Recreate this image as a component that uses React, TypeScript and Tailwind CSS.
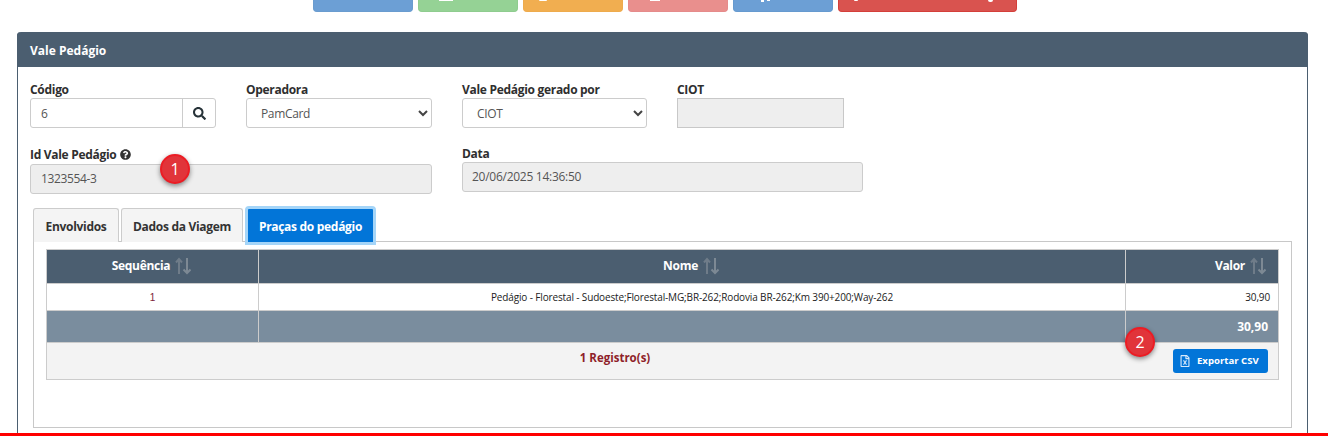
import React from "react";
import { FaSearch, FaQuestionCircle, FaRegFileExcel } from "react-icons/fa";

const font = { fontFamily: '"Open Sans", sans-serif' };

function SortIcon() {
  return (
    <svg width="16" height="18" viewBox="0 0 16 18" className="ml-[5px] shrink-0" fill="none" stroke="#6f7c89" strokeWidth="2">
      <path d="M4 17V2M1 5.5l3-3.5 3 3.5" />
      <path d="M12 1v15M8.5 12.5l3.5 3.5 3.5-3.5" stroke="#7d8994" />
    </svg>
  );
}

function Label({ children, className = "" }: { children: React.ReactNode; className?: string }) {
  return <div className={`text-[12px] leading-[17px] font-bold tracking-[-0.3px] text-[#2f2f2f] ${className}`}>{children}</div>;
}

function Select({ value }: { value: string }) {
  return (
    <div className="flex h-[30px] items-center justify-between rounded-[3px] border border-[#ccc] bg-white pl-[14px] pr-[3px] pt-[2px] text-[12px] tracking-[-0.35px] text-[#555]">
      <span>{value}</span>
      <svg width="10" height="7" viewBox="0 0 10 7" fill="none" stroke="#444" strokeWidth="2" className="-mt-[2px]">
        <path d="M1 1l4 4 4-4" />
      </svg>
    </div>
  );
}

function Badge({ n, className }: { n: number; className: string }) {
  return (
    <div className={`absolute flex h-[30px] w-[30px] items-center justify-center rounded-full border-2 border-[#ec1c24] bg-[#e1343a] text-[16px] text-white shadow-[0_2px_5px_rgba(0,0,0,0.45)] ${className}`}>
      {n}
    </div>
  );
}

function TopButton({ className, children }: { className: string; children?: React.ReactNode }) {
  return <div className={`relative rounded-b-[4px] border border-t-0 ${className}`}>{children}</div>;
}

function Sliver({ className }: { className: string }) {
  return <span className={`absolute top-0 bg-white ${className}`} />;
}

export default function App() {
  return (
    <div className="relative h-[436px] w-[1328px] overflow-hidden bg-white" style={font}>
      <div className="flex h-[12px] gap-[5px] pl-[313px]">
        <TopButton className="w-[100px] border-[#6a9ccf] bg-[#6c9fd5]" />
        <TopButton className="w-[100px] border-[#8fcc8f] bg-[#95d295]">
          <Sliver className="left-[20px] h-[1px] w-[14px]" />
        </TopButton>
        <TopButton className="w-[100px] border-[#eeab4d] bg-[#f1ae50]">
          <Sliver className="left-[15px] h-[1px] w-[8px] rounded-b-full" />
        </TopButton>
        <TopButton className="w-[100px] border-[#e58b8b] bg-[#e98f8d]">
          <Sliver className="left-[21px] h-[1px] w-[10px]" />
        </TopButton>
        <TopButton className="w-[100px] border-[#669acf] bg-[#6c9fd5]">
          <Sliver className="left-[27px] h-[2px] w-[3px]" />
          <Sliver className="left-[33px] h-[1px] w-[3px]" />
        </TopButton>
        <TopButton className="w-[179px] border-[#d43f3a] bg-[#d9534f]">
          <Sliver className="left-[15px] h-[1px] w-[4px] rounded-b-full" />
          <Sliver className="left-[149px] h-[2px] w-[5px] rounded-b-full" />
        </TopButton>
      </div>

      <div className="ml-[17px] mt-[20px] h-[401px] w-[1291px] rounded-t-[4px] border-x border-[#4b5e70]">
        <div className="-mx-px flex h-[35px] items-center rounded-t-[4px] bg-[#4b5e70] pl-[13px] pt-[2px] text-[12px] font-bold text-white">
          Vale Pedágio
        </div>

        <div className="relative px-[12px]">
          <div className="flex pt-[14px]">
            <div className="w-[186px]">
              <Label>Código</Label>
              <div className="flex h-[30px] rounded-[3px] border border-[#ccc] bg-white text-[12px] text-[#555]">
                <div className="flex flex-1 items-center pl-[10px] pt-[2px]">6</div>
                <div className="flex w-[33px] items-center justify-center border-l border-[#ccc] text-[#263238]">
                  <FaSearch size={13} />
                </div>
              </div>
            </div>
            <div className="ml-[30px] w-[186px]">
              <Label>Operadora</Label>
              <Select value="PamCard" />
            </div>
            <div className="ml-[30px] w-[185px]">
              <Label>Vale Pedágio gerado por</Label>
              <Select value="CIOT" />
            </div>
            <div className="ml-[30px] w-[167px]">
              <Label>CIOT</Label>
              <div className="h-[30px] border border-[#c8c8c8] bg-[#eee]" />
            </div>
          </div>

          <div className="flex pt-[17px]">
            <div className="w-[402px] pt-[1px]">
              <Label className="flex items-center gap-[4px]">
                Id Vale Pedágio <FaQuestionCircle size={11} className="text-[#333]" />
              </Label>
              <div className="mt-[1px] flex h-[30px] items-center rounded-[3px] border border-[#ccc] bg-[#eee] pl-[10px] text-[12px] tracking-[-0.35px] text-[#555]">
                1323554-3
              </div>
            </div>
            <div className="ml-[30px] w-[401px]">
              <Label>Data</Label>
              <div className="flex h-[30px] items-center rounded-[3px] border border-[#ccc] bg-[#eee] pl-[9px] text-[12px] tracking-[-0.27px] text-[#555]">
                20/06/2025 14:36:50
              </div>
            </div>
          </div>

          <Badge n={1} className="left-[142px] top-[87px]" />

          <div className="relative z-10 ml-[3px] mt-[14px] flex h-[34px] items-end gap-[2px] text-[12px] font-bold tracking-[-0.3px]">
            <div className="flex h-[34px] w-[86px] items-center justify-center rounded-t-[3px] border border-b-0 border-[#ccc] bg-[#f4f4f4] pt-[3px] text-[#333]">
              Envolvidos
            </div>
            <div className="flex h-[34px] w-[122px] items-center justify-center rounded-t-[3px] border border-b-0 border-[#ccc] bg-[#f4f4f4] pt-[3px] text-[#333]">
              Dados da Viagem
            </div>
            <div className="-mb-[3px] flex h-[39px] w-[131px] items-center justify-center rounded-t-[4px] border-[3px] border-[#a5d5f8] bg-[#0275d8] pt-[2px] text-white">
              Praças do pedágio
            </div>
          </div>

          <div className="relative ml-[3px] -mt-px h-[187px] w-[1259px] border border-[#c8c8c8] px-[12px] pt-[7px]">
            <div className="w-[1233px] border border-[#ccc]">
              <div className="flex h-[33px] bg-[#4b5e70] text-[12px] font-bold tracking-[-0.3px] text-white">
                <div className="flex w-[212px] items-center justify-center border-r border-[#ccc] pb-[1px] pr-[2px]">
                  Sequência <SortIcon />
                </div>
                <div className="flex flex-1 items-center justify-center border-r border-[#ccc] pb-[1px] pr-[2px]">
                  Nome <SortIcon />
                </div>
                <div className="flex w-[152px] items-center justify-end pb-[1px] pr-[12px]">
                  Valor <SortIcon />
                </div>
              </div>
              <div className="flex h-[27px] border-t border-[#ccc] bg-white text-[10px] tracking-[-0.14px] text-[#222]">
                <div className="flex w-[212px] items-center justify-center border-r border-[#ccc] text-[#7d1f3a]" style={{ fontFamily: '"Liberation Sans", sans-serif' }}>
                  1
                </div>
                <div className="flex flex-1 items-center justify-center border-r border-[#ccc]">
                  Pedágio - Florestal - Sudoeste;Florestal-MG;BR-262;Rodovia BR-262;Km 390+200;Way-262
                </div>
                <div className="flex w-[152px] items-center justify-end pr-[8px]">30,90</div>
              </div>
              <div className="flex h-[33px] border-y border-[#ccc] bg-[#7a8d9e] text-[12px] font-bold text-white">
                <div className="w-[212px] border-r border-[#ccc]" />
                <div className="flex-1 border-r border-[#ccc]" />
                <div className="flex w-[152px] items-center justify-end pr-[10px]">30,90</div>
              </div>
              <div className="flex h-[36px] items-center bg-[#f3f3f3] pr-[10px]">
                <div className="flex-1 pb-[6px] pl-[10px] text-center text-[11.5px] font-bold text-[#8f1f2a]">
                  1 Registro(s)
                </div>
                <div className="flex h-[24px] w-[95px] items-center gap-[6px] rounded-[3px] bg-[#0275d8] pl-[6px] text-[9.6px] font-bold text-white">
                  <FaRegFileExcel size={12} className="text-[#d6e9fb]" />
                  Exportar CSV
                </div>
              </div>
            </div>
          </div>

          <Badge n={2} className="left-[1107px] top-[260px]" />
        </div>
      </div>

      <div className="absolute bottom-0 left-0 h-[3px] w-full bg-[#f00]" />
    </div>
  );
}
